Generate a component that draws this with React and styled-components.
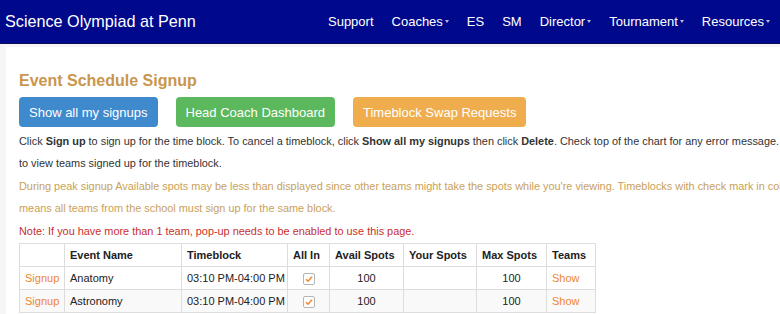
import styled, { createGlobalStyle } from 'styled-components';

const GlobalStyle = createGlobalStyle`
  body {
    margin: 0;
    background: #f5f5f5;
    font-family: "Liberation Sans", Arial, sans-serif;
    color: #333;
    overflow: hidden;
  }
`;

const Navbar = styled.nav`
  height: 44px;
  background: #00088c;
  display: flex;
  align-items: center;
  justify-content: space-between;
  padding: 0 1px 0 5px;
  border-bottom: 1px solid #0c0c5a;
  box-sizing: border-box;
`;

const Brand = styled.a`
  color: #fff;
  font-size: 16.2px;
  text-decoration: none;
`;

const NavList = styled.ul`
  display: flex;
  list-style: none;
  margin: 0;
  padding: 0;
`;

const NavItem = styled.li`
  color: #fff;
  font-size: 13px;
  padding: 0 9px;
  display: flex;
  align-items: center;
`;

const Caret = styled.span`
  display: inline-block;
  margin-left: 2px;
  border-top: 3px solid #b8b8d8;
  border-left: 2.5px solid transparent;
  border-right: 2.5px solid transparent;
`;

const Panel = styled.main`
  margin: 3px 0 0 6px;
  background: #fff;
  padding: 24px 13px 0 13px;
  min-height: 300px;
  width: 1000px;
`;

const Title = styled.h2`
  margin: 0 0 6px;
  font-size: 16px;
  line-height: 20px;
  font-weight: bold;
  color: #c8964d;
`;

const ButtonRow = styled.div`
  display: flex;
  gap: 18px;
`;

const Button = styled.button`
  height: 30px;
  padding: 0 10px;
  border: none;
  border-radius: 4px;
  font-family: inherit;
  font-size: 13px;
  color: #fff;
  background: ${(p) => p.$bg};
`;

const Para = styled.p`
  margin: ${(p) => p.$mt || 1}px 0 0;
  font-size: 10.9px;
  line-height: 22px;
  white-space: nowrap;
  color: ${(p) => p.$color || '#333'};
`;

const Table = styled.table`
  margin-top: 1px;
  border-collapse: collapse;
  font-size: 11px;
  table-layout: fixed;
  width: 577px;
  white-space: nowrap;
`;

const Th = styled.th`
  border: 1px solid #ddd;
  height: 22px;
  padding: 0 5px;
  text-align: left;
  font-weight: bold;
  color: #222;
`;

const Row = styled.tr`
  background: ${(p) => (p.$striped ? '#f9f9f9' : '#fff')};
`;

const Td = styled.td`
  border: 1px solid #ddd;
  height: 22px;
  padding: 0 5px;
  text-align: ${(p) => (p.$center ? 'center' : 'left')};
  color: #222;
`;

const Link = styled.a`
  color: #f0862c;
  text-decoration: none;
`;

const CheckBox = () => (
  <svg width="12" height="12" viewBox="0 0 12 12" style={{ verticalAlign: 'middle' }}>
    <rect x="0.5" y="0.5" width="11" height="11" rx="1.5" fill="#fff" stroke="#b5b5b5" />
    <path d="M3 6.2 L5 8.2 L9 3.8" fill="none" stroke="#f08a2a" strokeWidth="1.6" />
  </svg>
);

const cols = [45, 117, 106, 42, 74, 73, 70, 49];

const events = [
  { name: 'Anatomy', time: '03:10 PM-04:00 PM' },
  { name: 'Astronomy', time: '03:10 PM-04:00 PM' },
];

const App = () => (
  <>
    <GlobalStyle />
    <Navbar>
      <Brand>Science Olympiad at Penn</Brand>
      <NavList>
        <NavItem>Support</NavItem>
        <NavItem>Coaches<Caret /></NavItem>
        <NavItem>ES</NavItem>
        <NavItem>SM</NavItem>
        <NavItem>Director<Caret /></NavItem>
        <NavItem>Tournament<Caret /></NavItem>
        <NavItem>Resources<Caret /></NavItem>
      </NavList>
    </Navbar>
    <Panel>
      <Title>Event Schedule Signup</Title>
      <ButtonRow>
        <Button $bg="#3f89cd">Show all my signups</Button>
        <Button $bg="#5cb85c">Head Coach Dashboard</Button>
        <Button $bg="#f0ad4e">Timeblock Swap Requests</Button>
      </ButtonRow>
      <Para $mt={3}>
        Click <b>Sign up</b> to sign up for the time block. To cancel a timeblock, click <b>Show all my signups</b> then click <b>Delete</b>. Check top of the chart for any error message. Click <b>Show</b>
        <br />
        to view teams signed up for the timeblock.
      </Para>
      <Para $color="#c9a15a">
        During peak signup Available spots may be less than displayed since other teams might take the spots while you're viewing. Timeblocks with check mark in column All In
        <br />
        means all teams from the school must sign up for the same block.
      </Para>
      <Para $color="#c9302c">Note: If you have more than 1 team, pop-up needs to be enabled to use this page.</Para>
      <Table>
        <colgroup>
          {cols.map((w, i) => (
            <col key={i} style={{ width: w }} />
          ))}
        </colgroup>
        <thead>
          <tr>
            <Th></Th>
            <Th>Event Name</Th>
            <Th>Timeblock</Th>
            <Th>All In</Th>
            <Th>Avail Spots</Th>
            <Th>Your Spots</Th>
            <Th>Max Spots</Th>
            <Th>Teams</Th>
          </tr>
        </thead>
        <tbody>
          {events.map((ev, i) => (
            <Row key={ev.name} $striped={i % 2 === 1}>
              <Td><Link>Signup</Link></Td>
              <Td>{ev.name}</Td>
              <Td>{ev.time}</Td>
              <Td $center><CheckBox /></Td>
              <Td $center>100</Td>
              <Td></Td>
              <Td $center>100</Td>
              <Td><Link>Show</Link></Td>
            </Row>
          ))}
        </tbody>
      </Table>
    </Panel>
  </>
);

export default App;
